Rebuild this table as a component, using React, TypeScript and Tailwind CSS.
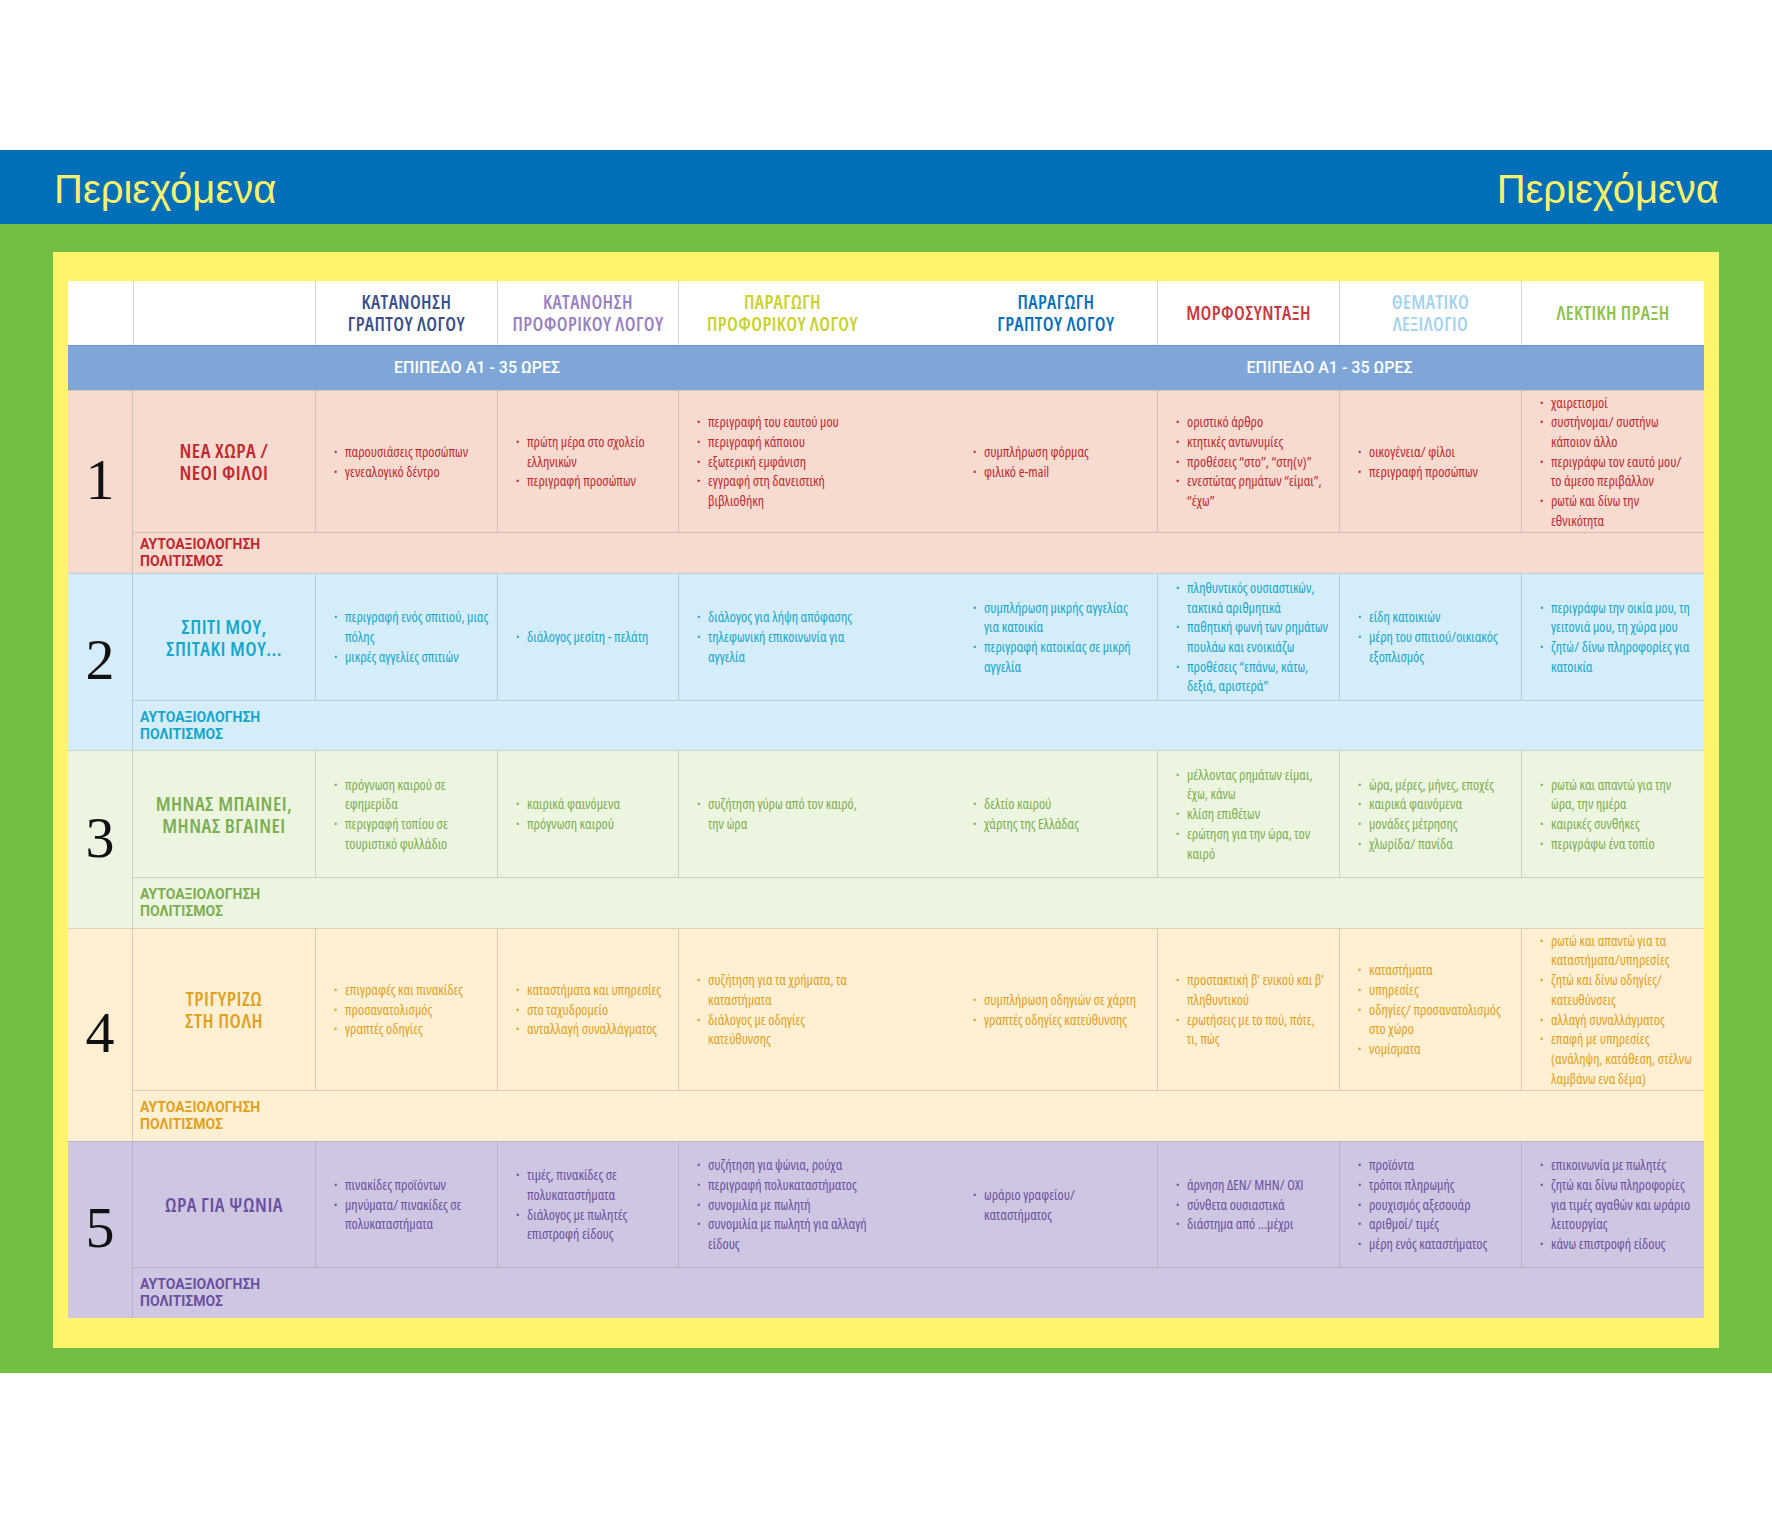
import React from "react";

type Row = {
  num: string;
  title: string[];
  bg: string;
  text: string;
  rows: string;
  cells: string[][];
};

const COLS =
  "grid grid-cols-[65px_182px_182px_181px_208px_69px_202px_182px_182px_183px]";

const rows: Row[] = [
  {
    num: "1",
    title: ["ΝΕΑ ΧΩΡΑ /", "ΝΕΟΙ ΦΙΛΟΙ"],
    bg: "bg-[#f7dbd0]",
    text: "text-[#c1272d]",
    rows: "grid-rows-[141px_41px]",
    cells: [
      ["παρουσιάσεις προσώπων", "γενεαλογικό δέντρο"],
      ["πρώτη μέρα στο σχολείο\nελληνικών", "περιγραφή προσώπων"],
      ["περιγραφή του εαυτού μου", "περιγραφή κάποιου", "εξωτερική εμφάνιση", "εγγραφή στη δανειστική\nβιβλιοθήκη"],
      ["συμπλήρωση φόρμας", "φιλικό e-mail"],
      ["οριστικό άρθρο", "κτητικές αντωνυμίες", "προθέσεις “στο”, “στη(ν)”", "ενεστώτας ρημάτων “είμαι”,\n“έχω”"],
      ["οικογένεια/ φίλοι", "περιγραφή προσώπων"],
      ["χαιρετισμοί", "συστήνομαι/ συστήνω\nκάποιον άλλο", "περιγράφω τον εαυτό μου/\nτο άμεσο περιβάλλον", "ρωτώ και δίνω την\nεθνικότητα"],
    ],
  },
  {
    num: "2",
    title: ["ΣΠΙΤΙ ΜΟΥ,", "ΣΠΙΤΑΚΙ ΜΟΥ..."],
    bg: "bg-[#d5edf8]",
    text: "text-[#14a7cb]",
    rows: "grid-rows-[126px_50px]",
    cells: [
      ["περιγραφή ενός σπιτιού, μιας\nπόλης", "μικρές αγγελίες σπιτιών"],
      ["διάλογος μεσίτη - πελάτη"],
      ["διάλογος για λήψη απόφασης", "τηλεφωνική επικοινωνία για\nαγγελία"],
      ["συμπλήρωση μικρής αγγελίας\nγια κατοικία", "περιγραφή κατοικίας σε μικρή\nαγγελία"],
      ["πληθυντικός ουσιαστικών,\nτακτικά αριθμητικά", "παθητική φωνή των ρημάτων\nπουλάω και ενοικιάζω", "προθέσεις “επάνω, κάτω,\nδεξιά, αριστερά”"],
      ["είδη κατοικιών", "μέρη του σπιτιού/οικιακός\nεξοπλισμός"],
      ["περιγράφω την οικία μου, τη\nγειτονιά μου, τη χώρα μου", "ζητώ/ δίνω πληροφορίες για\nκατοικία"],
    ],
  },
  {
    num: "3",
    title: ["ΜΗΝΑΣ ΜΠΑΙΝΕΙ,", "ΜΗΝΑΣ ΒΓΑΙΝΕΙ"],
    bg: "bg-[#ecf5e0]",
    text: "text-[#7bae4f]",
    rows: "grid-rows-[126px_51px]",
    cells: [
      ["πρόγνωση καιρού σε\nεφημερίδα", "περιγραφή τοπίου σε\nτουριστικό φυλλάδιο"],
      ["καιρικά φαινόμενα", "πρόγνωση καιρού"],
      ["συζήτηση γύρω από τον καιρό,\nτην ώρα"],
      ["δελτίο καιρού", "χάρτης της Ελλάδας"],
      ["μέλλοντας ρημάτων είμαι,\nέχω, κάνω", "κλίση επιθέτων", "ερώτηση για την ώρα, τον\nκαιρό"],
      ["ώρα, μέρες, μήνες, εποχές", "καιρικά φαινόμενα", "μονάδες μέτρησης", "χλωρίδα/ πανίδα"],
      ["ρωτώ και απαντώ για την\nώρα, την ημέρα", "καιρικές συνθήκες", "περιγράφω ένα τοπίο"],
    ],
  },
  {
    num: "4",
    title: ["ΤΡΙΓΥΡΙΖΩ", "ΣΤΗ ΠΟΛΗ"],
    bg: "bg-[#fff0d3]",
    text: "text-[#e2a020]",
    rows: "grid-rows-[161px_51px]",
    cells: [
      ["επιγραφές και πινακίδες", "προσανατολισμός", "γραπτές οδηγίες"],
      ["καταστήματα και υπηρεσίες", "στο ταχυδρομείο", "ανταλλαγή συναλλάγματος"],
      ["συζήτηση για τα χρήματα, τα\nκαταστήματα", "διάλογος με οδηγίες\nκατεύθυνσης"],
      ["συμπλήρωση οδηγιών σε χάρτη", "γραπτές οδηγίες κατεύθυνσης"],
      ["προστακτική β’ ενικού και β’\nπληθυντικού", "ερωτήσεις με το πού, πότε,\nτι, πώς"],
      ["καταστήματα", "υπηρεσίες", "οδηγίες/ προσανατολισμός\nστο χώρο", "νομίσματα"],
      ["ρωτώ και απαντώ για τα\nκαταστήματα/υπηρεσίες", "ζητώ και δίνω οδηγίες/\nκατευθύνσεις", "αλλαγή συναλλάγματος", "επαφή με υπηρεσίες\n(ανάληψη, κατάθεση, στέλνω\nλαμβάνω ενα δέμα)"],
    ],
  },
  {
    num: "5",
    title: ["ΩΡΑ ΓΙΑ ΨΩΝΙΑ"],
    bg: "bg-[#cfc6e2]",
    text: "text-[#6b4fa0]",
    rows: "grid-rows-[125px_51px]",
    cells: [
      ["πινακίδες προϊόντων", "μηνύματα/ πινακίδες σε\nπολυκαταστήματα"],
      ["τιμές, πινακίδες σε\nπολυκαταστήματα", "διάλογος με πωλητές\nεπιστροφή είδους"],
      ["συζήτηση για ψώνια, ρούχα", "περιγραφή πολυκαταστήματος", "συνομιλία με πωλητή", "συνομιλία με πωλητή για αλλαγή\nείδους"],
      ["ωράριο γραφείου/\nκαταστήματος"],
      ["άρνηση ΔΕΝ/ ΜΗΝ/ ΟΧΙ", "σύνθετα ουσιαστικά", "διάστημα από ...μέχρι"],
      ["προϊόντα", "τρόποι πληρωμής", "ρουχισμός αξεσουάρ", "αριθμοί/ τιμές", "μέρη ενός καταστήματος"],
      ["επικοινωνία με πωλητές", "ζητώ και δίνω πληροφορίες\nγια τιμές αγαθών και ωράριο\nλειτουργίας", "κάνω επιστροφή είδους"],
    ],
  },
];

function Bullets({ items }: { items: string[] }) {
  return (
    <ul className="flex flex-col text-[14px] leading-[19.7px]">
      {items.map((t, i) => (
        <li key={i} className="flex">
          <span className="w-[11px] shrink-0 text-[9px]">•</span>
          <span className="whitespace-pre-line">{t}</span>
        </li>
      ))}
    </ul>
  );
}

function Cell({ items, line }: { items: string[]; line: boolean }) {
  return (
    <div
      className={`flex items-center pl-[18px] pr-[2px] ${line ? "border-l border-[#8c8c8c]/35" : ""}`}
    >
      <Bullets items={items} />
    </div>
  );
}

function Unit({ r }: { r: Row }) {
  return (
    <div className={`${COLS} ${r.rows} ${r.bg} ${r.text} border-t border-[#8c8c8c]/30`}>
      <div className="row-span-2 flex items-center justify-center border-r border-[#8c8c8c]/35 pb-[4px] font-['Liberation_Serif',serif] font-stretch-normal text-[58px] leading-none text-[#111]">
        {r.num}
      </div>
      <div className="flex flex-col items-center justify-center gap-[1px] text-center text-[20px] font-semibold leading-[21px] tracking-[0.5px]">
        {r.title.map((t) => (
          <span key={t}>{t}</span>
        ))}
      </div>
      <Cell items={r.cells[0]} line />
      <Cell items={r.cells[1]} line />
      <Cell items={r.cells[2]} line />
      <div />
      <Cell items={r.cells[3]} line={false} />
      <Cell items={r.cells[4]} line />
      <Cell items={r.cells[5]} line />
      <Cell items={r.cells[6]} line />
      <div className="col-span-9 flex flex-col justify-center border-t border-[#8c8c8c]/35 pl-[7px] font-['Roboto',sans-serif] text-[14px] font-bold font-stretch-normal leading-[17px]">
        <span>ΑΥΤΟΑΞΙΟΛΟΓΗΣΗ</span>
        <span>ΠΟΛΙΤΙΣΜΟΣ</span>
      </div>
    </div>
  );
}

function Head({ lines, color, line }: { lines: string[]; color: string; line: boolean }) {
  return (
    <div
      className={`flex flex-col items-center justify-center text-center text-[19px] font-semibold leading-[22px] tracking-[0.4px] ${color} ${line ? "border-l border-[#d4d4d4]" : ""}`}
    >
      {lines.map((t) => (
        <span key={t}>{t}</span>
      ))}
    </div>
  );
}

export default function App() {
  return (
    <div className="w-[1772px] h-[1525px] bg-white font-['Open_Sans',sans-serif]">
      <div className="h-[150px]" />
      <div className="flex h-[74px] items-center justify-between bg-[#006fba] pl-[54px] pr-[53px] pt-[4px]">
        <h1 className="font-['Liberation_Sans',sans-serif] text-[40px] leading-none text-[#fcf26a]">Περιεχόμενα</h1>
        <h1 className="font-['Liberation_Sans',sans-serif] text-[40px] leading-none text-[#fcf26a]">Περιεχόμενα</h1>
      </div>
      <div className="bg-[#72bf44] px-[53px] pt-[28px] pb-[25px]">
        <div className="bg-[#fff46c] px-[15px] pt-[29px] pb-[30px]">
          <div className="font-stretch-condensed">
            <div className={`${COLS} h-[64px] bg-white`}>
              <div />
              <div className="border-l border-[#d4d4d4]" />
              <Head lines={["ΚΑΤΑΝΟΗΣΗ", "ΓΡΑΠΤΟΥ ΛΟΓΟΥ"]} color="text-[#3d4f88]" line />
              <Head lines={["ΚΑΤΑΝΟΗΣΗ", "ΠΡΟΦΟΡΙΚΟΥ ΛΟΓΟΥ"]} color="text-[#9a81c0]" line />
              <Head lines={["ΠΑΡΑΓΩΓΗ", "ΠΡΟΦΟΡΙΚΟΥ ΛΟΓΟΥ"]} color="text-[#c9d12b]" line />
              <div />
              <Head lines={["ΠΑΡΑΓΩΓΗ", "ΓΡΑΠΤΟΥ ΛΟΓΟΥ"]} color="text-[#0a6fb8]" line={false} />
              <Head lines={["ΜΟΡΦΟΣΥΝΤΑΞΗ"]} color="text-[#c9383e]" line />
              <Head lines={["ΘΕΜΑΤΙΚΟ", "ΛΕΞΙΛΟΓΙΟ"]} color="text-[#a3d3ef]" line />
              <Head lines={["ΛΕΚΤΙΚΗ ΠΡΑΞΗ"]} color="text-[#8dc14a]" line />
            </div>
            <div className={`${COLS} h-[45px] border-t border-[#6f93c4] bg-[#7ea7d8] font-['Roboto',sans-serif] font-stretch-normal text-[16px] font-medium text-white`}>
              <div className="col-span-5 flex items-center justify-center">ΕΠΙΠΕΔΟ Α1 - 35 ΩΡΕΣ</div>
              <div />
              <div className="col-span-4 flex items-center justify-center">ΕΠΙΠΕΔΟ Α1 - 35 ΩΡΕΣ</div>
            </div>
            {rows.map((r) => (
              <Unit key={r.num} r={r} />
            ))}
          </div>
        </div>
      </div>
    </div>
  );
}
